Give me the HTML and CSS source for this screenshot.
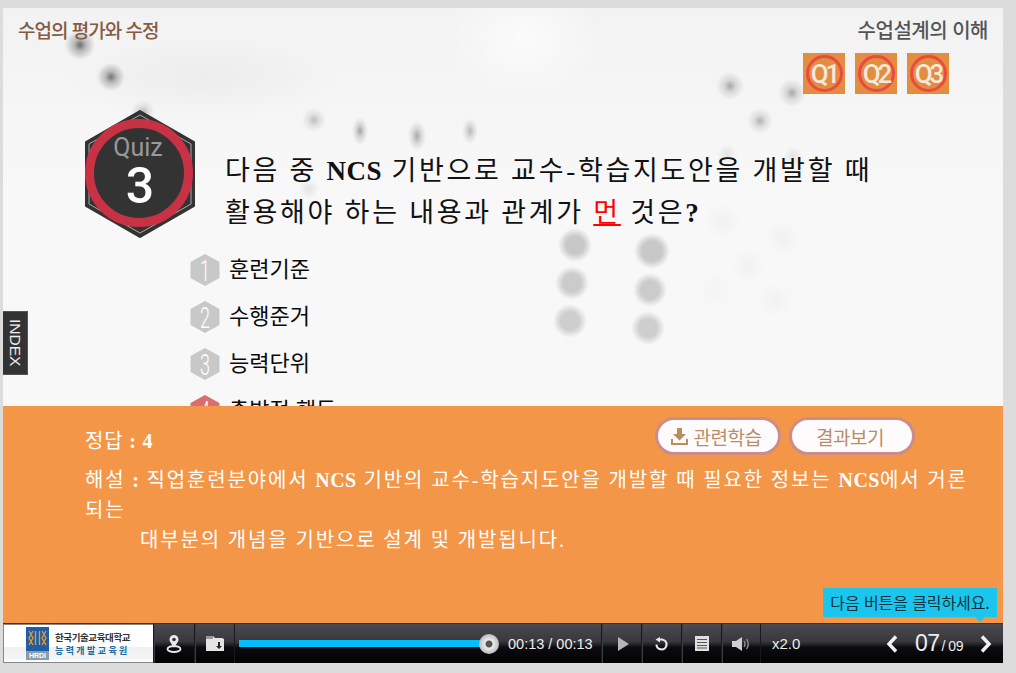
FILE: index.html
```html
<!DOCTYPE html>
<html lang="ko">
    <head>
        <meta charset="UTF-8" />
        <meta name="viewport" content="width=device-width, initial-scale=1.0" />
        <title>수업의 평가와 수정</title>
        <link rel="stylesheet" href="styles.css">
    </head>
    <body>
        <div class="stage">
            <div class="content">
                <div class="top-row">
                    <span class="chapter">수업의 평가와 수정</span>
                    <span class="section">수업설계의 이해</span>
                </div>
                <div class="q-row">
                    <div class="q-btn"><span>Q1</span></div>
                    <div class="q-btn"><span>Q2</span></div>
                    <div class="q-btn"><span>Q3</span></div>
                </div>
                <div class="question">
                    <svg class="badge" width="110" height="128" viewBox="0 0 110 128">
                        <polygon points="55,1 109,32 109,96 55,127 1,96 1,32" fill="#333" stroke="#333" stroke-width="2" />
                        <polygon points="55,5 106,34 106,94 55,123 4,94 4,34" fill="#333" stroke="#aaa" stroke-width="1" />
                        <circle cx="54" cy="63" r="49.500" fill="#333" stroke="#c93245" stroke-width="9" />
                        <text x="53" y="46" text-anchor="middle" class="badge-quiz">Quiz</text>
                        <text x="55" y="93" text-anchor="middle" class="badge-num">3</text>
                    </svg>
                    <p class="question-text">다음 중 <b>NCS</b> 기반으로 교수-학습지도안을 개발할 때<br>활용해야 하는 내용과 관계가 <u class="far">먼</u> 것은<b>?</b></p>
                </div>
                <ul class="options">
                    <li>
                        <svg width="30" height="32" viewBox="0 0 30 32"><polygon points="15,0 29.500,8 29.500,24 15,32 0.500,24 0.500,8" fill="#c9c8c9" /><text x="25" y="27" text-anchor="middle" transform="scale(.6 1)" class="hex-num">1</text></svg>
                        <span>훈련기준</span>
                    </li>
                    <li>
                        <svg width="30" height="32" viewBox="0 0 30 32"><polygon points="15,0 29.500,8 29.500,24 15,32 0.500,24 0.500,8" fill="#c9c8c9" /><text x="25" y="27" text-anchor="middle" transform="scale(.6 1)" class="hex-num">2</text></svg>
                        <span>수행준거</span>
                    </li>
                    <li>
                        <svg width="30" height="32" viewBox="0 0 30 32"><polygon points="15,0 29.500,8 29.500,24 15,32 0.500,24 0.500,8" fill="#c9c8c9" /><text x="25" y="27" text-anchor="middle" transform="scale(.6 1)" class="hex-num">3</text></svg>
                        <span>능력단위</span>
                    </li>
                    <li>
                        <svg width="30" height="32" viewBox="0 0 30 32"><polygon points="15,0 29.500,8 29.500,24 15,32 0.500,24 0.500,8" fill="#d96e6e" /><text x="25" y="27" text-anchor="middle" transform="scale(.6 1)" class="hex-num">4</text></svg>
                        <span>출발점 행동</span>
                    </li>
                </ul>
            </div>

            <div class="answer">
                <div class="answer-top">
                    <span class="answer-title">정답 <b>: 4</b></span>
                    <div class="answer-btns">
                        <button class="pill">
                            <svg width="17" height="17" viewBox="0 0 17 17"><path d="M6 0h5v6h4l-6.500 6.500L2 6h4z M0 11h2v4h13v-4h2v6H0z" fill="#b98f5e" /></svg>
                            관련학습
                        </button>
                        <button class="pill">결과보기</button>
                    </div>
                </div>
                <p class="explain">해설 <b>:</b> 직업훈련분야에서 <b>NCS</b> 기반의 교수-학습지도안을 개발할 때 필요한 정보는 <b>NCS</b>에서 거론<br>되는<br><span class="explain-indent">대부분의 개념을 기반으로 설계 및 개발됩니다.</span></p>
            </div>

            <div class="player">
                <div class="logo">
                    <div class="logo-mark">
                        <svg width="23" height="24" viewBox="0 0 23 24">
                            <path d="M3 4l4 7-4 7M7 4l-4 7 4 7M16 4l4 7-4 7M20 4l-4 7 4 7M9.500 4v14M13.500 4v14" fill="none" stroke="#f09a28" stroke-width="1.300" />
                        </svg>
                        <span>HRDI</span>
                    </div>
                    <div class="logo-text">
                        <span class="logo-univ">한국기술교육대학교</span>
                        <span class="logo-dept">능력개발교육원</span>
                    </div>
                </div>
                <div class="ctl ctl-map">
                    <svg width="16" height="20" viewBox="0 0 16 20">
                        <path d="M8 1a4.500 4.500 0 0 1 4.500 4.500C12.500 8 10 10 8 14 6 10 3.500 8 3.500 5.500A4.500 4.500 0 0 1 8 1z" fill="#e8e8e8" />
                        <circle cx="8" cy="5.500" r="1.800" fill="#333" />
                        <ellipse cx="8" cy="15" rx="6.500" ry="3" fill="none" stroke="#e8e8e8" stroke-width="1.800" />
                    </svg>
                </div>
                <div class="ctl ctl-folder">
                    <svg width="20" height="17" viewBox="0 0 20 17">
                        <path d="M1 1h7l2 2h7l2 1v12H1z" fill="#e4e4e4" />
                        <path d="M1 1h7v3H1z" fill="#999" />
                        <path d="M13 7h2v4h2l-3 3-3-3h2z" fill="#222" />
                    </svg>
                </div>
                <div class="progress-wrap">
                    <div class="progress"><div class="progress-fill"></div></div>
                    <div class="knob"></div>
                </div>
                <span class="time">00:13 / 00:13</span>
                <div class="ctl ctl-play">
                    <svg width="13" height="14" viewBox="0 0 13 14"><polygon points="1,0 12,7 1,14" fill="#b5b5b5" /></svg>
                </div>
                <div class="ctl">
                    <svg width="15" height="14" viewBox="0 0 15 14">
                        <path d="M5 2.500H8a5 5 0 1 1-5.500 5" fill="none" stroke="#e8e8e8" stroke-width="2.200" />
                        <polygon points="6,0 6,5.500 1.500,2.500" fill="#e8e8e8" />
                    </svg>
                </div>
                <div class="ctl">
                    <svg width="14" height="15" viewBox="0 0 14 15">
                        <rect width="14" height="15" fill="#e0e0e0" />
                        <path d="M2 3.500h10M2 6.500h10M2 9.500h10M2 12h10" stroke="#555" stroke-width="1.200" />
                    </svg>
                </div>
                <div class="ctl ctl-last">
                    <svg width="18" height="14" viewBox="0 0 18 14">
                        <path d="M0 4h4l6-4v14l-6-4H0z" fill="#d0d0d0" />
                        <path d="M12 4q2 3 0 6M14.500 2q3.500 5 0 10" fill="none" stroke="#999" stroke-width="1.300" />
                    </svg>
                </div>
                <span class="speed">x2.0</span>
                <div class="pager">
                    <svg width="12" height="18" viewBox="0 0 12 18"><path d="M10 1.500L3 9l7 7.500" fill="none" stroke="#f2f2f2" stroke-width="3.400" /></svg>
                    <span class="page-now">07<small>/ 09</small></span>
                    <svg width="12" height="18" viewBox="0 0 12 18"><path d="M2 1.500L9 9l-7 7.500" fill="none" stroke="#f2f2f2" stroke-width="3.400" /></svg>
                </div>
            </div>

            <div class="index-tab"><span>INDEX</span></div>
            <div class="tooltip">다음 버튼을 클릭하세요.</div>
        </div>
    </body>
</html>
```

FILE: styles.css
```css
body {
    margin: 0;
    background: #dcdcdc;
    overflow: hidden;
    font-family: "Noto Sans CJK KR", "Noto Sans", sans-serif;
}

.stage {
    position: relative;
    width: 1000px;
    height: 655px;
    margin: 8px 0 0 3px;
    display: flex;
    flex-direction: column;
}

/* blurred photo behind the quiz, spots are in stage coordinates */
.content {
    height: 398px;
    overflow: hidden;
    box-sizing: border-box;
    padding: 9px 15px 0;
    background-color: #f7f7f7;
    background-image:
        radial-gradient(circle at 77px 37px, rgba(50, 50, 50, .7), rgba(50, 50, 50, .3) 6px, rgba(50, 50, 50, 0) 15px),
        radial-gradient(circle at 108px 69px, rgba(50, 50, 50, .65), rgba(50, 50, 50, .28) 6px, rgba(50, 50, 50, 0) 14px),
        radial-gradient(circle at 140px 104px, rgba(50, 50, 50, .3), rgba(50, 50, 50, .1) 6px, rgba(50, 50, 50, 0) 12px),
        radial-gradient(circle at 311px 112px, rgba(50, 50, 50, .28), rgba(50, 50, 50, .1) 6px, rgba(50, 50, 50, 0) 12px),
        radial-gradient(circle at 306px 181px, rgba(50, 50, 50, .1), rgba(50, 50, 50, 0) 10px),
        radial-gradient(ellipse 8px 14px at 357px 123px, rgba(50, 50, 50, .42), rgba(50, 50, 50, .15) 50%, rgba(50, 50, 50, 0)),
        radial-gradient(ellipse 9px 15px at 414px 128px, rgba(50, 50, 50, .4), rgba(50, 50, 50, .15) 50%, rgba(50, 50, 50, 0)),
        radial-gradient(ellipse 8px 13px at 467px 123px, rgba(50, 50, 50, .32), rgba(50, 50, 50, .12) 50%, rgba(50, 50, 50, 0)),
        radial-gradient(circle at 727px 78px, rgba(50, 50, 50, .4), rgba(50, 50, 50, .15) 6px, rgba(50, 50, 50, 0) 14px),
        radial-gradient(circle at 789px 85px, rgba(50, 50, 50, .4), rgba(50, 50, 50, .15) 6px, rgba(50, 50, 50, 0) 14px),
        radial-gradient(circle at 757px 113px, rgba(50, 50, 50, .35), rgba(50, 50, 50, .12) 6px, rgba(50, 50, 50, 0) 13px),
        radial-gradient(circle at 724px 146px, rgba(50, 50, 50, .1), rgba(50, 50, 50, 0) 10px),
        radial-gradient(circle at 790px 148px, rgba(50, 50, 50, .1), rgba(50, 50, 50, 0) 10px),
        radial-gradient(circle at 572px 237px, #c8c8c8 9px, rgba(200, 200, 200, 0) 17px),
        radial-gradient(circle at 649px 243px, #c8c8c8 10px, rgba(200, 200, 200, 0) 18px),
        radial-gradient(circle at 569px 275px, #cbcbcb 9px, rgba(200, 200, 200, 0) 17px),
        radial-gradient(circle at 647px 282px, #cbcbcb 9px, rgba(200, 200, 200, 0) 17px),
        radial-gradient(circle at 567px 313px, #cecece 9px, rgba(200, 200, 200, 0) 17px),
        radial-gradient(circle at 645px 320px, #cecece 9px, rgba(200, 200, 200, 0) 17px),
        radial-gradient(circle at 720px 213px, rgba(50, 50, 50, .035), rgba(50, 50, 50, 0) 18px),
        radial-gradient(circle at 780px 230px, rgba(50, 50, 50, .035), rgba(50, 50, 50, 0) 18px),
        radial-gradient(circle at 745px 258px, rgba(50, 50, 50, .035), rgba(50, 50, 50, 0) 18px),
        radial-gradient(circle at 712px 282px, rgba(50, 50, 50, .025), rgba(50, 50, 50, 0) 18px),
        radial-gradient(circle at 772px 292px, rgba(50, 50, 50, .03), rgba(50, 50, 50, 0) 18px),
        radial-gradient(ellipse 140px 40px at 200px 70px, rgba(50, 50, 50, .04), rgba(50, 50, 50, 0)),
        radial-gradient(ellipse 80px 60px at 520px 30px, rgba(255, 255, 255, .7), rgba(255, 255, 255, 0)),
        linear-gradient(#f2f2f2, #f8f8f8 45%);
}

.top-row {
    display: flex;
    justify-content: space-between;
    line-height: 26px;
    height: 26px;
    font-weight: 500;
}
.chapter {
    color: #845b43;
    font-size: 19px;
    letter-spacing: -1px;
}
.section {
    color: #555;
    font-size: 20px;
    letter-spacing: -.5px;
}

.q-row {
    display: flex;
    gap: 10px;
    margin: 10px 0 0 785px;
}
.q-btn {
    width: 42px;
    height: 41px;
    background: #e28d3f;
    display: flex;
    align-items: center;
    justify-content: center;
}
.q-btn > span {
    width: 31px;
    height: 31px;
    border: 3px solid #ea4a42;
    border-radius: 50%;
    display: flex;
    align-items: center;
    justify-content: center;
    color: #f6e8dc;
    font-family: "Roboto", sans-serif;
    font-weight: 500;
    font-size: 26px;
    letter-spacing: -3px;
}

.question {
    display: flex;
    margin: 16px 0 0 67px;
}
.badge {
    flex-shrink: 0;
}
.badge-quiz {
    font-family: "Roboto", sans-serif;
    font-size: 25px;
    fill: #999;
}
.badge-num {
    font-family: "Roboto", sans-serif;
    font-weight: 500;
    font-size: 50px;
    fill: #fff;
}
.question-text {
    margin: 40px 0 0 30px;
    font-family: "Liberation Serif", "Noto Sans CJK KR", serif;
    font-size: 27px;
    line-height: 42px;
    letter-spacing: 2.700px;
    color: #111;
    white-space: nowrap;
}
.question-text > b {
    letter-spacing: .5px;
}
.far {
    color: #f00;
}

.options {
    list-style-type: none;
    margin: 0;
    padding: 0;
    margin: 16px 0 0 172px;
    display: flex;
    flex-direction: column;
    gap: 15px;
}
.options > li {
    display: flex;
    align-items: center;
    gap: 10px;
    height: 32px;
    font-size: 22px;
    color: #0a0a0a;
}
.options > li > span {
    margin: -7px 0 0 -1px;
}
.hex-num {
    font-family: "Roboto", sans-serif;
    font-weight: 300;
    font-size: 30px;
    fill: #fff;
}

.answer {
    height: 217px;
    box-sizing: border-box;
    padding: 11px 0 0 82px;
    background: #f39648;
    color: #fff;
}
.answer-top {
    display: flex;
    justify-content: space-between;
    align-items: center;
    padding-right: 88px;
    height: 38px;
}
.answer-title {
    padding-top: 6px;
    font-size: 20px;
    letter-spacing: .8px;
    font-family: "Liberation Serif", "Noto Sans CJK KR", serif;
}
.answer-btns {
    display: flex;
    gap: 8px;
}
.pill {
    width: 126px;
    height: 38px;
    box-sizing: border-box;
    padding: 0 4px 0 0;
    border: 3px solid #cf8b88;
    border-radius: 19px;
    background: #fdfbfb;
    color: #b98d69;
    font-family: inherit;
    font-size: 19px;
    letter-spacing: -.5px;
    display: flex;
    align-items: center;
    justify-content: center;
    gap: 6px;
}
.explain {
    margin: 10px 0 0;
    width: 910px;
    font-family: "Liberation Serif", "Noto Sans CJK KR", serif;
    font-size: 20px;
    line-height: 30px;
    letter-spacing: 1.850px;
}
.explain > b {
    letter-spacing: .5px;
}
.explain-indent {
    padding-left: 55px;
}

.player {
    height: 40px;
    display: flex;
    align-items: center;
    color: #eee;
    font-family: "Liberation Sans", sans-serif;
    background: linear-gradient(#4b4a52, #38373e 45%, #0c0c10 60%, #020204);
    border-top: 1px solid #333;
    box-sizing: border-box;
}
.logo {
    width: 150px;
    height: 39px;
    box-sizing: border-box;
    background: linear-gradient(#fff 60%, #eef0f2 60%, #f4f5f6 90%, #fff);
    border: 1px solid #888;
    border-right: none;
    display: flex;
    align-items: center;
    padding-left: 22px;
    gap: 6px;
}
.logo-mark {
    width: 23px;
    height: 33px;
    background: #1f5ea5;
    display: flex;
    flex-direction: column;
    align-items: center;
    overflow: hidden;
}
.logo-mark > span {
    width: 100%;
    flex: 1;
    background: #8a9bab;
    color: #fff;
    font-size: 7px;
    font-weight: bold;
    line-height: 9px;
    text-align: center;
}
.logo-text {
    display: flex;
    flex-direction: column;
    font-family: "Noto Sans CJK KR", sans-serif;
    font-weight: 700;
    line-height: 13px;
}
.logo-univ {
    color: #333;
    font-size: 9.500px;
    letter-spacing: -.4px;
}
.logo-dept {
    color: #1d6a9c;
    font-size: 9px;
    letter-spacing: 2.400px;
}

.ctl {
    width: 40px;
    height: 39px;
    flex-shrink: 0;
    box-sizing: border-box;
    display: flex;
    align-items: center;
    justify-content: center;
    border-left: 1px solid #1a1a1e;
    box-shadow: inset 1px 0 0 #3c3b42;
}
.ctl-map {
    width: 41px;
}
.ctl-play {
    padding-left: 3px;
}
.ctl-last {
    border-right: 1px solid #1a1a1e;
}

.progress-wrap {
    width: 267px;
    height: 39px;
    flex-shrink: 0;
    display: flex;
    align-items: center;
    border-left: 1px solid #1a1a1e;
    padding-left: 4px;
    box-sizing: border-box;
}
.progress {
    width: 248px;
    height: 7px;
    flex-shrink: 0;
}
.progress-fill {
    height: 100%;
    background: #00bdfb;
}
.knob {
    width: 20px;
    height: 20px;
    margin-left: -8px;
    border-radius: 50%;
    flex-shrink: 0;
    background: radial-gradient(circle, #555 0 3px, #eee 4px, #bbb 10px);
}
.time {
    width: 106px;
    flex-shrink: 0;
    padding-left: 13px;
    margin-left: -6px;
    box-sizing: border-box;
    font-size: 14.500px;
    white-space: nowrap;
}
.speed {
    width: 60px;
    padding-left: 11px;
    box-sizing: border-box;
    font-size: 15px;
}
.pager {
    display: flex;
    align-items: center;
    margin-left: 65px;
    gap: 17px;
}
.page-now {
    width: 48px;
    font-size: 23px;
    letter-spacing: -.5px;
    white-space: nowrap;
}
.page-now > small {
    font-size: 14px;
    margin-left: 2px;
}

.index-tab {
    position: absolute;
    left: 0;
    top: 303px;
    width: 25px;
    height: 64px;
    background: #333;
    border: 1px solid #555;
    border-left: none;
    box-sizing: border-box;
    display: flex;
    align-items: center;
    justify-content: center;
}
.index-tab > span {
    writing-mode: vertical-rl;
    font-family: "Liberation Sans", sans-serif;
    font-size: 15.500px;
    color: #eee;
}

.tooltip {
    position: absolute;
    left: 820px;
    top: 580px;
    width: 174px;
    height: 29px;
    line-height: 29px;
    text-align: center;
    background: #1ac6ee;
    color: #12303c;
    font-size: 16px;
    letter-spacing: -.1px;
}
.tooltip::after {
    content: "";
    position: absolute;
    left: 152px;
    top: 29px;
    border: 5px solid transparent;
    border-top-color: #1ac6ee;
}
```
